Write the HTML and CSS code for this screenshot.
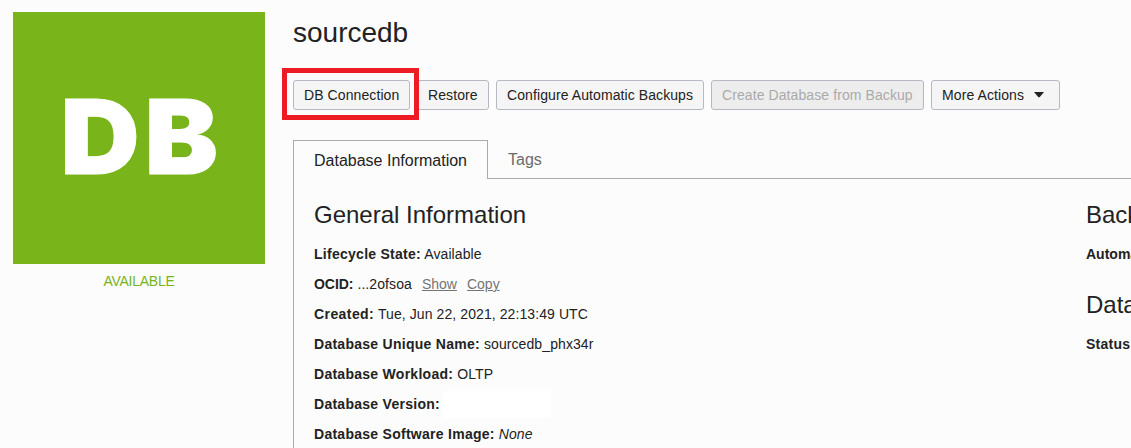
FILE: index.html
```html
<!DOCTYPE html>
<html lang="en">
<head>
<meta charset="utf-8">
<title>sourcedb</title>
<link rel="stylesheet" href="styles.css">
</head>
<body>
<div class="page">
  <aside class="side">
    <div class="tile"><span class="tile-text">DB</span></div>
    <div class="state">AVAILABLE</div>
  </aside>
  <main class="main">
    <h1 class="title"><span>sourcedb</span></h1>
    <div class="actions">
      <button class="btn btn-connection"><span>DB Connection</span><i class="highlight"></i></button>
      <button class="btn btn-restore"><span>Restore</span></button>
      <button class="btn btn-configure"><span>Configure Automatic Backups</span></button>
      <button class="btn btn-create" disabled><span>Create Database from Backup</span></button>
      <button class="btn btn-more"><span>More Actions</span><svg class="caret" width="10" height="6" viewBox="0 0 10 6"><path d="M0 0H10L5.8 5Q5 5.6 4.2 5Z" fill="#222"/></svg></button>
    </div>
    <nav class="tabs">
      <div class="tab tab-active"><span>Database Information</span></div>
      <div class="tab"><span>Tags</span></div>
    </nav>
    <div class="panel">
      <section class="col-general">
        <h2 class="heading"><span>General Information</span></h2>
        <p class="row"><b>Lifecycle State:</b> <span>Available</span></p>
        <p class="row"><b class="ocid">OCID:</b> <span>...2ofsoa</span><a class="link">Show</a><a class="link">Copy</a></p>
        <p class="row"><b class="created">Created:</b> <span>Tue, Jun 22, 2021, 22:13:49 UTC</span></p>
        <p class="row"><b>Database Unique Name:</b> <span>sourcedb_phx34r</span></p>
        <p class="row"><b>Database Workload:</b> <span>OLTP</span></p>
        <p class="row"><b>Database Version:</b><span class="blank"></span></p>
        <p class="row"><b>Database Software Image:</b> <em>None</em></p>
      </section>
      <section class="col-backup">
        <h2 class="heading">Backup</h2>
        <p class="row"><b class="automatic">Automatic Backup:</b></p>
        <h2 class="heading heading-next">Data Guard</h2>
        <p class="row"><b>Status:</b></p>
      </section>
    </div>
  </main>
</div>
</body>
</html>
```

FILE: styles.css
```css
* { box-sizing: border-box; }
body {
  margin: 0;
  width: 1131px;
  height: 448px;
  overflow: hidden;
  background: #fcfcfc;
  color: #222;
  font: 14px/30px "Liberation Sans", Arial, sans-serif;
}
.page { display: flex; gap: 28px; height: 448px; padding: 12px 0 0 13px; overflow: hidden; }
.side { flex: none; width: 252px; }
.tile {
  display: flex; align-items: center; justify-content: center;
  height: 252px; background: #78b41a; color: #fff;
}
.tile-text {
  margin-right: -5px;
  font: 900 103.3px/250px Inter, sans-serif;
  letter-spacing: 5px;
  -webkit-text-stroke: 1px #fff;
  transform: translateY(-1px) scaleX(1.06);
}
.state { padding-top: 2px; text-align: center; color: #78b41a; letter-spacing: -0.25px; }
.main { flex: none; width: 838px; }
.title { margin: 0; height: 68px; font-size: 28px; font-weight: 400; line-height: 42px; }
.actions { display: flex; gap: 7px; height: 30px; }
.btn {
  position: relative; display: flex; align-items: center;
  height: 30px; margin: 0; padding: 0 10px;
  border: 1px solid #b4b9c3; border-radius: 3px;
  background: #f5f5f5; color: #222; font: inherit; line-height: 28px; white-space: nowrap;
  letter-spacing: 0.09px;
}
.btn-connection { width: 117px; z-index: 1; }
.btn-restore { width: 72px; }
.btn-configure { width: 208px; }
.btn-create { width: 213px; background: #ededed; color: #aaa; }
.btn-more { width: 129px; }
.caret { margin-left: 10px; }
.highlight { position: absolute; left: -12px; top: -13px; width: 137px; height: 52px; border: 5px solid #ed1c24; }
.tabs { display: flex; height: 39px; margin-top: 30px; font-size: 16px; line-height: 40px; }
.tabs::after { content: ""; flex: 1; border-bottom: 1px solid #aaa; }
.tab { padding-left: 20px; color: #6b6b6b; border-bottom: 1px solid #aaa; }
.tab-active { width: 195px; border: 1px solid #aaa; border-bottom: 0; color: #222; }
.panel { display: flex; height: 269px; padding: 16px 0 0 20px; border-left: 1px solid #aaa; }
.col-general { flex: none; width: 772px; }
.col-backup { flex: none; width: 200px; white-space: nowrap; }
.heading { height: 44px; margin: 0; font-size: 24px; font-weight: 400; line-height: 40px; }
.heading-next { margin-top: 16px; }
.row { height: 30px; margin: 0; white-space: nowrap; letter-spacing: 0.09px; }
.row b { letter-spacing: 0.27px; }
.row .ocid { letter-spacing: -0.05px; }
.row .created { letter-spacing: 0.42px; }
.row .automatic { letter-spacing: 0; }
.link { margin-left: 10px; color: #757575; text-decoration: underline; letter-spacing: 0; }
.blank { display: inline-block; width: 108px; height: 27px; margin: -2px 0 0 3px; background: #fff; vertical-align: middle; }
```
